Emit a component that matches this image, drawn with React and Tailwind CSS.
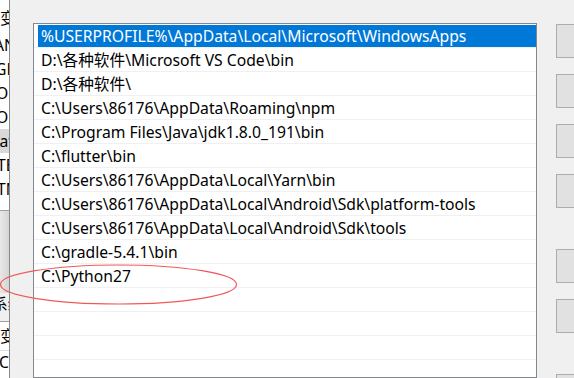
import React from "react";

const rows = [
  "%USERPROFILE%\\AppData\\Local\\Microsoft\\WindowsApps",
  "D:\\各种软件\\Microsoft VS Code\\bin",
  "D:\\各种软件\\",
  "C:\\Users\\86176\\AppData\\Roaming\\npm",
  "C:\\Program Files\\Java\\jdk1.8.0_191\\bin",
  "C:\\flutter\\bin",
  "C:\\Users\\86176\\AppData\\Local\\Yarn\\bin",
  "C:\\Users\\86176\\AppData\\Local\\Android\\Sdk\\platform-tools",
  "C:\\Users\\86176\\AppData\\Local\\Android\\Sdk\\tools",
  "C:\\gradle-5.4.1\\bin",
  "C:\\Python27",
  "",
  "",
  "",
  "",
  "",
];

const font = { fontFamily: '"Noto Sans", "Noto Sans CJK SC", sans-serif' };

export default function App() {
  return (
    <div
      className="relative flex h-[378px] w-[574px] overflow-hidden bg-[#f0f0f0] text-[15.7px] text-black"
      style={font}
    >
      {/* background window strip */}
      <div className="flex h-full w-[10px] shrink-0 flex-col overflow-hidden border-r border-[#8a8a8a] bg-white leading-[24px]">
        <div className="h-[33px] shrink-0 whitespace-nowrap pt-[8px] leading-[20px]">变量</div>
        <div className="h-[24px] shrink-0 whitespace-nowrap -ml-[6px]">ANDROID_HOME</div>
        <div className="h-[24px] shrink-0 whitespace-nowrap -ml-[5px]">GRADLE_HOME</div>
        <div className="h-[24px] shrink-0 whitespace-nowrap -ml-[4px]">OneDrive</div>
        <div className="h-[24px] shrink-0 whitespace-nowrap -ml-[4px]">OneDriveConsumer</div>
        <div className="h-[24px] shrink-0 whitespace-nowrap bg-[#d9d9d9]">
          <span className="-ml-[10px]">Path</span>
        </div>
        <div className="h-[24px] shrink-0 whitespace-nowrap -ml-[3px]">TEMP</div>
        <div className="h-[24px] shrink-0 whitespace-nowrap -ml-[3px]">TMP</div>
        <div className="h-[10px] shrink-0 border-b border-[#a0a0a0]"></div>
        <div className="h-[82px] shrink-0 bg-gradient-to-r from-[#e8e8e8] to-[#d4d4d4]"></div>
        <div className="h-[28px] shrink-0 whitespace-nowrap bg-[#f0f0f0] -ml-[8px] leading-[22px]">系统</div>
        <div className="h-[29px] shrink-0 whitespace-nowrap border-t border-[#a0a0a0] bg-white pt-[4px] leading-[20px]">变量</div>
        <div className="h-[24px] shrink-0 whitespace-nowrap border-t border-[#dcdcdc] bg-white -ml-[1px] leading-[22px]">CLASSPATH</div>
      </div>

      {/* list box */}
      <div className="ml-[23px] mt-[23px] flex w-[504px] shrink-0 flex-col border border-[#828790] bg-white">
        {rows.map((r, i) => (
          <div
            key={i}
            className="flex h-[24px] shrink-0 items-stretch border-b border-[#f0f0f0]"
          >
            <div
              className={
                i === 0
                  ? "ml-[4px] mt-[1px] flex flex-1 items-center whitespace-nowrap bg-[#0078d7] pl-[3px] pt-[2px] text-white"
                  : "ml-[4px] mt-[1px] flex flex-1 items-center whitespace-nowrap pl-[3px] pt-[2px]"
              }
            >
              {r}
            </div>
          </div>
        ))}
      </div>

      {/* buttons */}
      <div className="ml-[19px] flex shrink-0 flex-col pt-[24px]">
        <div className="h-[34px] w-[40px] shrink-0 border border-[#adadad] bg-[#e1e1e1]"></div>
        <div className="mt-[16px] h-[34px] w-[40px] shrink-0 border border-[#adadad] bg-[#e1e1e1]"></div>
        <div className="mt-[16px] h-[34px] w-[40px] shrink-0 border border-[#adadad] bg-[#e1e1e1]"></div>
        <div className="mt-[16px] h-[34px] w-[40px] shrink-0 border border-[#adadad] bg-[#e1e1e1]"></div>
        <div className="mt-[41px] h-[34px] w-[40px] shrink-0 border border-[#adadad] bg-[#e1e1e1]"></div>
        <div className="mt-[16px] h-[34px] w-[40px] shrink-0 border border-[#adadad] bg-[#e1e1e1]"></div>
        <div className="mt-[41px] h-[34px] w-[40px] shrink-0 border border-[#adadad] bg-[#e1e1e1]"></div>
      </div>

      {/* red annotation ellipse */}
      <svg
        className="pointer-events-none absolute left-0 top-0"
        width="574"
        height="378"
        viewBox="0 0 574 378"
      >
        <ellipse
          cx="118.5"
          cy="284.5"
          rx="118"
          ry="19.5"
          fill="none"
          stroke="#ee5a5a"
          strokeWidth="1.2"
        />
      </svg>
    </div>
  );
}
